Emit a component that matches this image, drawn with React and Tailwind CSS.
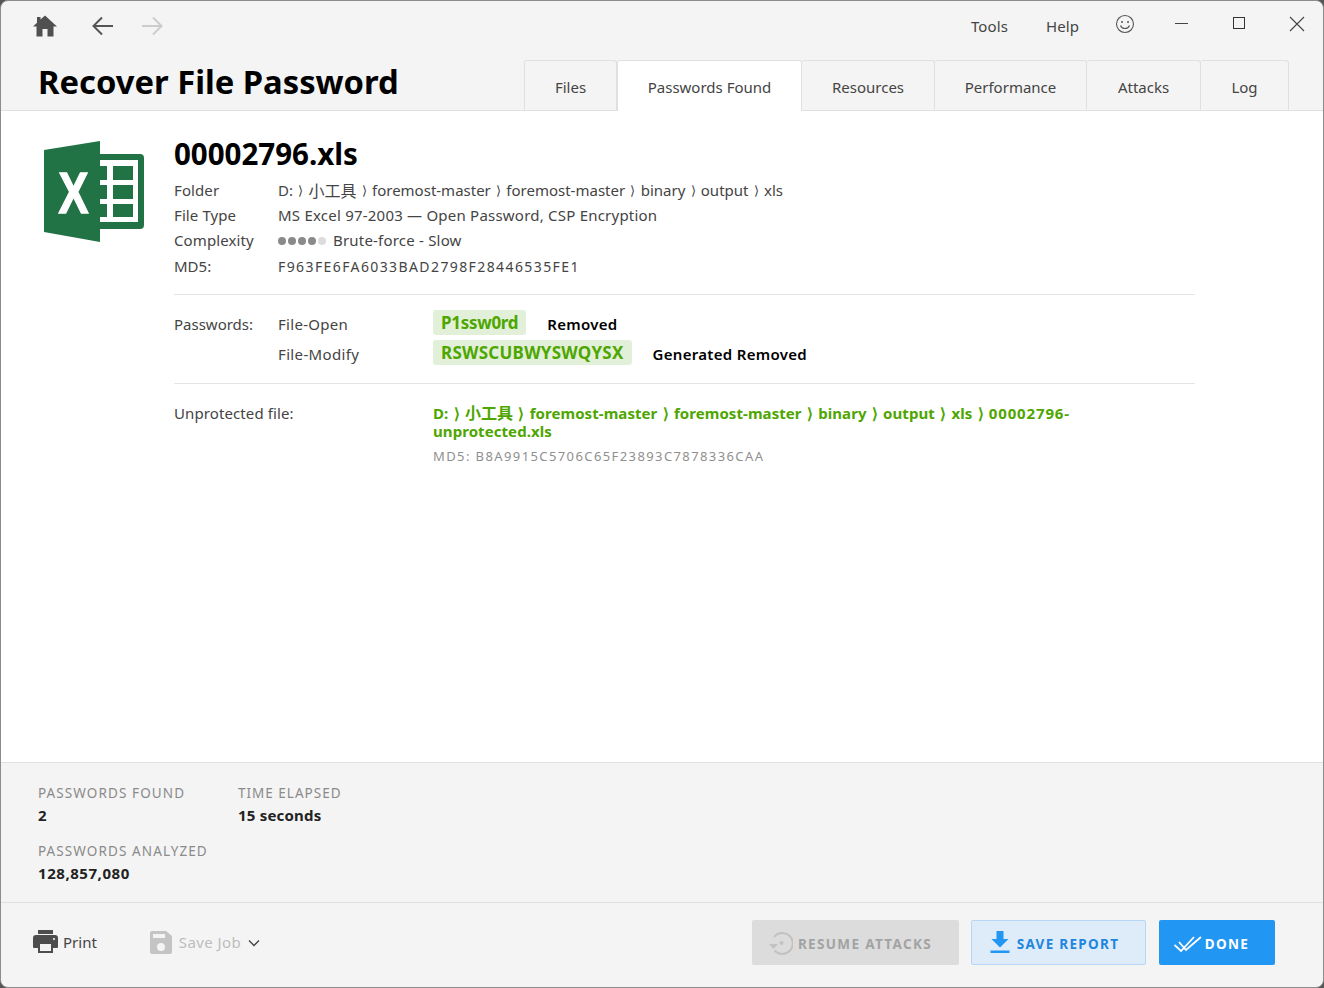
const F = { fontFamily: '"Noto Sans", "Noto Sans CJK SC", sans-serif' };

function Tab({ label, active, w }) {
  return (
    <div
      className={
        active
          ? "flex h-[51px] items-center justify-center rounded-t-[3px] border border-b-0 border-[#e0e0e0] bg-white pt-[3px] text-[15px] text-[#444]"
          : "flex h-[50px] items-center justify-center rounded-t-[3px] border border-b-0 border-l-0 border-[#e0e0e0] first:border-l bg-[#f4f4f4] pt-1 text-[15px] text-[#444]"
      }
      style={{ width: w }}
    >
      {label}
    </div>
  );
}

function Sep() {
  return <span className="mx-[5.25px] text-[13px]">⟩</span>;
}

function GSep() {
  return <span className="mx-[1.25px]">⟩</span>;
}

function ExcelLogo() {
  return (
    <svg width="100" height="101" viewBox="0 0 100 101" className="shrink-0">
      <rect x="50" y="13" width="50" height="75" rx="4" fill="#217346" />
      <path d="M0 9 L56 0 V101 L0 91 Z" fill="#217346" />
      <rect x="56" y="19" width="38" height="62" fill="#fff" />
      <path d="M69 25 H89 V39 H69 Z M69 44 H89 V58 H69 Z M69 63 H89 V76 H69 Z" fill="#217346" />
      <path d="M55 25 H63 V39 H55 Z M55 44 H63 V58 H55 Z M55 63 H63 V76 H55 Z" fill="#217346" />
      <text x="29.5" y="72" textAnchor="middle" fontFamily="Liberation Sans" fontWeight="700" fontSize="57" fill="#fff" stroke="#fff" strokeWidth="1.4" textLength="30" lengthAdjust="spacingAndGlyphs">X</text>
    </svg>
  );
}

export default function App() {
  return (
    <div className="h-[988px] w-[1324px] overflow-hidden bg-[#555]" style={F}>
      <div className="flex h-full w-full flex-col overflow-hidden rounded-[8px] border border-[#8c8c8c] bg-[#f4f4f4] text-[#444]">
        {/* header */}
        <div className="relative flex h-[110px] shrink-0 flex-col border-b border-[#e0e0e0]">
          <div className="flex h-[59px] shrink-0 items-start">
            <div className="ml-[31px] mt-[13px] flex items-center">
              <svg width="26" height="24" viewBox="0 0 26 24" fill="#505050">
                <path d="M13 1.5 L25 12.5 H21.5 V22.5 H15.5 V15 H10.5 V22.5 H4.5 V12.5 H1 L5 8.8 V3 H8.5 V5.6 Z" />
              </svg>
              <svg width="24" height="22" viewBox="0 0 24 22" fill="none" stroke="#555" strokeWidth="2" className="ml-[33px]">
                <path d="M22 11 H3 M11 2.5 L2.5 11 L11 19.5" />
              </svg>
              <svg width="24" height="22" viewBox="0 0 24 22" fill="none" stroke="#ccc" strokeWidth="2" className="ml-[25px]">
                <path d="M2 11 H21 M13 2.5 L21.5 11 L13 19.5" />
              </svg>
            </div>
            <div className="ml-auto flex items-start text-[15px] text-[#444]">
              <span className="mt-[14px] tracking-[0.1px]">Tools</span>
              <span className="ml-[38px] mt-[14px] tracking-[0.1px]">Help</span>
              <svg width="20" height="20" viewBox="0 0 20 20" fill="none" stroke="#555" strokeWidth="1.1" className="ml-[36px] mt-[13px]">
                <circle cx="10" cy="10" r="8.5" />
                <circle cx="7" cy="8" r="1" fill="#555" stroke="none" />
                <circle cx="13" cy="8" r="1" fill="#555" stroke="none" />
                <path d="M5.5 11.5 C7 15.5 13 15.5 14.5 11.5" />
              </svg>
              <div className="ml-[40px] mt-[22px] h-px w-[13px] bg-[#444]" />
              <div className="ml-[45px] mt-[16px] h-[12px] w-[12px] border border-[#333]" />
              <svg width="16" height="16" viewBox="0 0 16 16" stroke="#444" strokeWidth="1.1" className="ml-[44px] mr-[18px] mt-[15px]">
                <path d="M1 1 L15 15 M15 1 L1 15" />
              </svg>
            </div>
          </div>
          <div className="flex min-h-0 flex-1 items-end">
            <div className="mb-[4px] ml-[37px] text-[32.75px] font-bold leading-[48px] text-black">Recover File Password</div>
            <div className="absolute left-[523px] top-[59px] flex">
              <Tab label="Files" w={93} />
              <Tab label="Passwords Found" w={185} active />
              <Tab label="Resources" w={133} />
              <Tab label="Performance" w={152} />
              <Tab label="Attacks" w={114} />
              <Tab label="Log" w={88} />
            </div>
          </div>
        </div>

        {/* body */}
        <div className="flex min-h-0 flex-1 bg-white pl-[43px] pr-[128px] pt-[30px]">
          <ExcelLogo />
          <div className="ml-[30px] flex-1 text-[15px] text-[#444]">
            <div className="-mt-[3px] text-[29.5px] font-bold leading-[32px] text-black">00002796.xls</div>
            <div className="mt-[8px] flex h-[25px] items-center">
              <span className="w-[104px] tracking-[0.1px]">Folder</span>
              <span className="flex items-center">D:<Sep /><span className="text-[16px]">小工具</span><Sep />foremost-master<Sep />foremost-master<Sep />binary<Sep />output<Sep />xls</span>
            </div>
            <div className="flex h-[25px] items-center">
              <span className="w-[104px] tracking-[0.1px]">File Type</span>
              <span className="tracking-[0.22px]">MS Excel 97-2003 — Open Password, CSP Encryption</span>
            </div>
            <div className="flex h-[25px] items-center">
              <span className="w-[104px] tracking-[0.1px]">Complexity</span>
              <span className="flex gap-[2px]">
                <i className="h-2 w-2 rounded-full bg-[#8a8a8a]" />
                <i className="h-2 w-2 rounded-full bg-[#8a8a8a]" />
                <i className="h-2 w-2 rounded-full bg-[#8a8a8a]" />
                <i className="h-2 w-2 rounded-full bg-[#8a8a8a]" />
                <i className="h-2 w-2 rounded-full bg-[#dcdcdc]" />
              </span>
              <span className="ml-[7px] tracking-[0.2px]">Brute-force - Slow</span>
            </div>
            <div className="flex h-[26px] items-center">
              <span className="w-[104px]">MD5:</span>
              <span className="text-[14px] tracking-[1.4px]">F963FE6FA6033BAD2798F28446535FE1</span>
            </div>
            <div className="mt-[15px] border-t border-[#e4e4e4] pt-[14px]">
              <div className="flex h-[30px] items-center">
                <span className="w-[104px]">Passwords:</span>
                <span className="w-[155px] tracking-[0.3px]">File-Open</span>
                <span className="mb-[3px] rounded-[3px] bg-[#e3f0d9] px-[8px] text-[17px] font-bold leading-[25px] tracking-[-0.3px] text-[#4ea600]">P1ssw0rd</span>
                <span className="ml-[21px] font-semibold tracking-[0.3px] text-black">Removed</span>
              </div>
              <div className="flex h-[30px] items-center">
                <span className="w-[104px]" />
                <span className="w-[155px] tracking-[0.35px]">File-Modify</span>
                <span className="mb-[3px] rounded-[3px] bg-[#e3f0d9] px-[8px] text-[17px] font-bold leading-[25px] tracking-[0.25px] text-[#4ea600]">RSWSCUBWYSWQYSX</span>
                <span className="ml-[21px] font-semibold tracking-[0.3px] text-black">Generated Removed</span>
              </div>
            </div>
            <div className="mt-[14px] flex border-t border-[#e4e4e4] pt-[20px]">
              <span className="w-[259px] shrink-0 leading-[18px] tracking-[0.1px]">Unprotected file:</span>
              <div>
                <div className="text-[15px] font-bold leading-[18px] tracking-[0.07px] text-[#4ea600]">
                  <div className="whitespace-nowrap">
                    D: <GSep /> <span className="text-[16px]">小工具</span> <GSep /> foremost-master <GSep /> foremost-master <GSep /> binary <GSep /> output <GSep /> xls <GSep /> <span className="tracking-[0.85px]">00002796-</span>
                  </div>
                  <div>unprotected.xls</div>
                </div>
                <div className="mt-[7px] text-[13px] leading-[18px] tracking-[1.4px] text-[#8f8f8f]">MD5: B8A9915C5706C65F23893C7878336CAA</div>
              </div>
            </div>
          </div>
        </div>

        {/* stats */}
        <div className="h-[141px] shrink-0 border-y border-[#e0e0e0] pl-[37px] pt-[21px]">
          <div className="flex">
            <div className="w-[200px]">
              <div className="text-[13.5px] leading-[18px] tracking-[1.1px] text-[#8a8a8a]">PASSWORDS FOUND</div>
              <div className="mt-[3px] text-[15px] font-bold leading-[20px] text-[#222]">2</div>
            </div>
            <div>
              <div className="text-[13.5px] leading-[18px] tracking-[1px] text-[#8a8a8a]">TIME ELAPSED</div>
              <div className="mt-[3px] text-[15px] font-bold leading-[20px] tracking-[0.2px] text-[#222]">15 seconds</div>
            </div>
          </div>
          <div className="mt-[17px] text-[13.5px] leading-[18px] tracking-[1.1px] text-[#8a8a8a]">PASSWORDS ANALYZED</div>
          <div className="mt-[3px] text-[15px] font-bold leading-[20px] tracking-[0.55px] text-[#222]">128,857,080</div>
        </div>

        {/* footer */}
        <div className="flex h-[84px] shrink-0 items-start pl-[32px] pt-[17px]">
          <div className="mt-[9px] flex h-[26px] items-center text-[15px] text-[#444]">
            <svg width="25" height="24" viewBox="0 0 25 24" fill="#4d4d4d">
              <path d="M5 0 H20 V4 H5 Z" />
              <path fillRule="evenodd" d="M3 5 H22 Q25 5 25 8 V17 Q25 18 24 18 H20 V23 H5 V18 H1 Q0 18 0 17 V8 Q0 5 3 5 Z M7 14 V21 H18 V14 Z M21 8 A1 1 0 1 0 21.01 8 Z" />
            </svg>
            <span className="ml-[5px]">Print</span>
            <svg width="22" height="23" viewBox="0 0 22 23" className="ml-[53px]" fill="#c4c4c4">
              <path fillRule="evenodd" d="M2 0 H16 L22 5 V21 Q22 23 20 23 H2 Q0 23 0 21 V2 Q0 0 2 0 Z M3 3 V7 H15 V3 Z M11 12 A4 4 0 1 0 11.01 20 A4 4 0 1 0 11 12 Z" />
            </svg>
            <span className="ml-[7px] tracking-[0.4px] text-[#bdbdbd]">Save Job</span>
            <svg width="12" height="8" viewBox="0 0 12 8" fill="none" stroke="#444" strokeWidth="1.4" className="ml-[7px] mt-[2px]">
              <path d="M1 1.5 L6 6.5 L11 1.5" />
            </svg>
          </div>
          <div className="ml-auto mr-[48px] flex">
            <div className="flex h-[45px] w-[207px] items-center justify-center rounded-[2px] bg-[#dcdcdc] pr-[10px] text-[13.5px] font-bold tracking-[1.35px] text-[#a3a3a3]">
              <svg width="24" height="24" viewBox="0 0 24 24" fill="none" stroke="#c2c2c2" strokeWidth="2" className="mr-[5px]">
                <path d="M5 6 A10.5 10.5 0 1 1 5.5 19.5" />
                <path d="M0 13 H9 L4.5 18 Z" fill="#c2c2c2" stroke="none" />
                <circle cx="12.5" cy="12" r="2" fill="#c2c2c2" stroke="none" />
              </svg>
              <span className="pt-[3px]">RESUME ATTACKS</span>
            </div>
            <div className="ml-[12px] flex h-[45px] w-[175px] items-center justify-center rounded-[2px] border border-[#b5d7f5] bg-[#deecf9] pr-[8px] text-[13.5px] font-bold tracking-[1.3px] text-[#1f86de]">
              <svg width="20" height="23" viewBox="0 0 20 23" fill="#2196f3" className="mr-[7px]">
                <path d="M6.5 0 H13.5 V8 H18.5 L10 16.5 L1.5 8 H6.5 Z M0.5 19.5 H19.5 V22 H0.5 Z" />
              </svg>
              <span className="pt-[3px]">SAVE REPORT</span>
            </div>
            <div className="ml-[13px] flex h-[45px] w-[116px] items-center justify-center rounded-[2px] bg-[#2196f3] pr-[11px] text-[13.5px] font-bold tracking-[1.3px] text-white">
              <svg width="28" height="17" viewBox="0 0 28 17" fill="none" stroke="#fff" strokeWidth="1.8" className="mr-[3px] mt-[2px]">
                <path d="M0.5 10 L7 16 L20 2 M5 7 L12 15 L27 2" />
              </svg>
              <span className="pt-[3px]">DONE</span>
            </div>
          </div>
        </div>
      </div>
    </div>
  );
}
